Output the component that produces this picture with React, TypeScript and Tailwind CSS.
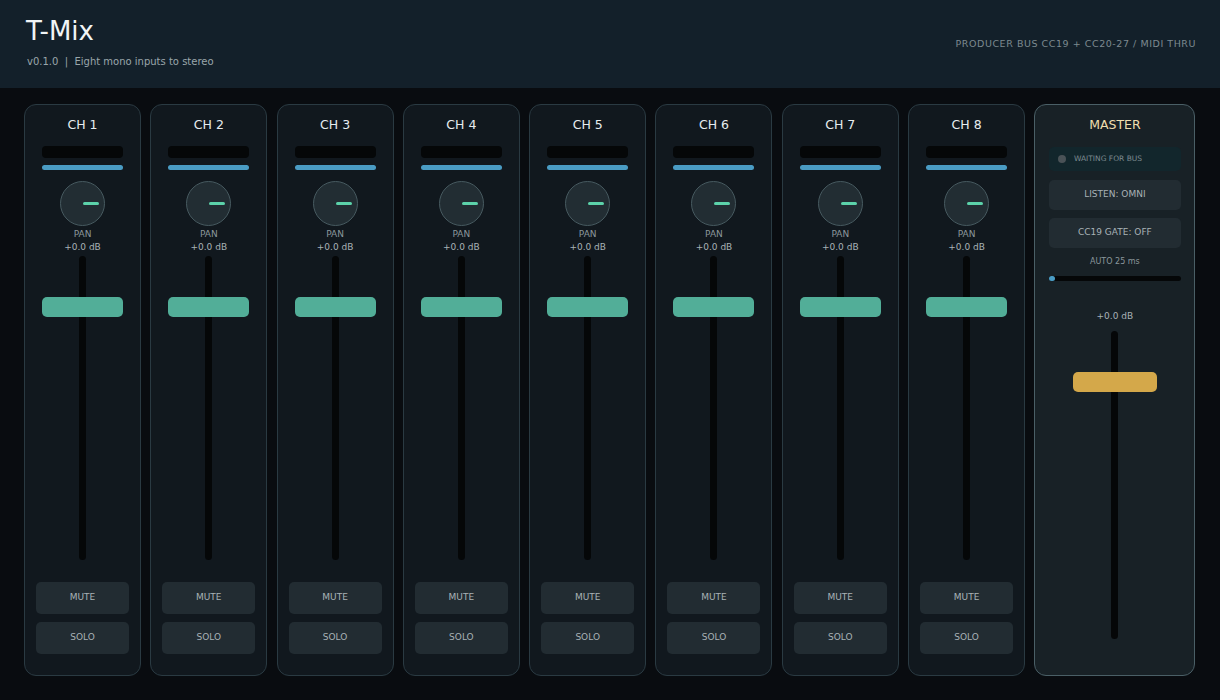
import React from "react";

const font = { fontFamily: '"DejaVu Sans", sans-serif' };

function Strip({ n }: { n: number }) {
  return (
    <div className="w-[117px] h-[572px] rounded-[12px] border border-[#2a3a42] bg-[#11181e] flex flex-col items-center">
      <div className="mt-[12px] h-[16px] text-[12.5px] leading-[16px] text-[#e6ecef]">CH {n}</div>
      <div className="mt-[13px] w-[81px] h-[12px] rounded-[4px] bg-[#050708]" />
      <div className="mt-[7px] w-[81px] h-[5px] rounded-full bg-[#4a9cc4]" />
      <div className="mt-[11px] w-[45px] h-[45px] rounded-full border border-[#475a60] bg-[#222d33] relative">
        <div className="absolute left-[22px] top-[20px] w-[16px] h-[3px] rounded-full bg-[#5cd2aa]" />
      </div>
      <div className="mt-[3px] text-[9px] leading-[11px] text-[#8b979c]">PAN</div>
      <div className="mt-[2px] text-[9px] leading-[11px] text-[#a8b2b6]">+0.0 dB</div>
      <div className="mt-[3px] relative w-[81px] h-[304px] flex justify-center">
        <div className="w-[7px] h-full rounded-full bg-[#050708]" />
        <div className="absolute left-0 top-[41px] w-[81px] h-[20px] rounded-[5px] bg-[#52ae98]" />
      </div>
      <div className="mt-[22px] w-[93px] h-[32px] rounded-[5px] bg-[#222c32] flex items-center justify-center text-[9px] text-[#a8b2b6]">MUTE</div>
      <div className="mt-[8px] w-[93px] h-[32px] rounded-[5px] bg-[#222c32] flex items-center justify-center text-[9px] text-[#a8b2b6]">SOLO</div>
    </div>
  );
}

export default function App() {
  return (
    <div style={font} className="w-[1220px] h-[700px] bg-[#090c10] overflow-hidden">
      <div className="h-[88px] bg-[#13202a] flex justify-between px-[26px]">
        <div>
          <div className="mt-[14px] text-[26px] leading-[34px] text-[#f1f4f5]">T-Mix</div>
          <div className="mt-[6px] ml-[1px] text-[10px] text-[#9aa6ab]">v0.1.0&nbsp; |&nbsp; Eight mono inputs to stereo</div>
        </div>
        <div className="mt-[37px] mr-[-2px] text-[9.5px] tracking-[0.55px] text-[#7d8a90]">PRODUCER BUS CC19 + CC20-27 / MIDI THRU</div>
      </div>
      <div className="flex gap-[9.3px] pl-[24px] pt-[16px]">
        {[1, 2, 3, 4, 5, 6, 7, 8].map((n) => <Strip key={n} n={n} />)}
        <div className="w-[161px] h-[572px] rounded-[12px] border border-[#4a5f66] bg-[#182126] flex flex-col items-center">
          <div className="mt-[12px] h-[16px] text-[12.5px] leading-[16px] text-[#f0dfae]">MASTER</div>
          <div className="mt-[14px] w-[132px] h-[24px] rounded-[5px] bg-[#12262c] flex items-center pl-[9px] gap-[8px]">
            <div className="w-[8px] h-[8px] rounded-full bg-[#4a5257]" />
            <span className="text-[7.5px] text-[#7d8a90]">WAITING FOR BUS</span>
          </div>
          <div className="mt-[9px] w-[132px] h-[30px] rounded-[5px] bg-[#222c32] flex items-center justify-center text-[9px] text-[#a8b2b6]">LISTEN: OMNI</div>
          <div className="mt-[8px] w-[132px] h-[30px] rounded-[5px] bg-[#222c32] flex items-center justify-center text-[9px] text-[#a8b2b6]">CC19 GATE: OFF</div>
          <div className="mt-[9px] text-[8px] leading-[10px] text-[#8b979c]">AUTO 25 ms</div>
          <div className="mt-[9px] w-[132px] h-[5px] rounded-full bg-[#050708] relative">
            <div className="absolute left-0 top-0 w-[6px] h-[5px] rounded-full bg-[#4a9cc4]" />
          </div>
          <div className="mt-[30px] text-[9px] leading-[11px] text-[#a8b2b6]">+0.0 dB</div>
          <div className="mt-[9px] relative w-[84px] h-[308px] flex justify-center">
            <div className="w-[7px] h-full rounded-full bg-[#050708]" />
            <div className="absolute left-0 top-[41px] w-[84px] h-[20px] rounded-[5px] bg-[#d4a84a]" />
          </div>
        </div>
      </div>
    </div>
  );
}
